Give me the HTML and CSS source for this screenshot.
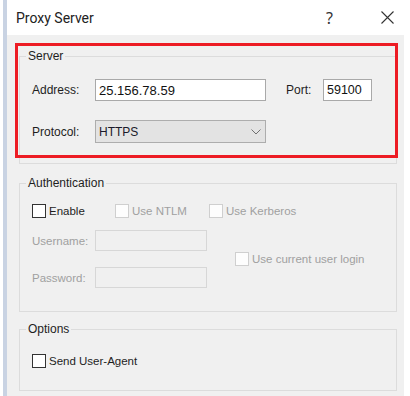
FILE: index.html
```html
<!DOCTYPE html>
<html>
<head>
	<title>Proxy Server</title>
	<meta charset="utf-8">
	<link rel="stylesheet" href="styles.css">
</head>
<body>

	<div class="window">
		<div class="titlebar">
			<span class="title">Proxy Server</span>
			<span class="help">?</span>
			<span class="close">
				<svg width="13" height="13" viewBox="0 0 13 13"><path d="M0.5 0.5 L12.5 12.5 M12.5 0.5 L0.5 12.5" stroke="#333" stroke-width="1.1" fill="none"/></svg>
			</span>
		</div>

		<div class="client">
			<fieldset class="group server">
				<legend>Server</legend>
				<div class="row first">
					<span class="label">Address:</span>
					<input class="text address" type="text" value="25.156.78.59">
					<span class="label port-label">Port:</span>
					<input class="text port" type="text" value="59100">
				</div>
				<div class="row second">
					<span class="label">Protocol:</span>
					<div class="select">
						<span>HTTPS</span>
						<svg width="10" height="6" viewBox="0 0 10 6"><path d="M0.5 0.5 L5 5 L9.5 0.5" stroke="#707070" stroke-width="1" fill="none"/></svg>
					</div>
				</div>
			</fieldset>

			<fieldset class="group auth">
				<legend>Authentication</legend>
				<div class="checks">
					<label class="check enable"><span class="box"></span>Enable</label>
					<label class="check ntlm disabled"><span class="box"></span>Use NTLM</label>
					<label class="check disabled"><span class="box"></span>Use Kerberos</label>
				</div>
				<div class="login">
					<div class="fields">
						<div class="field">
							<span class="label">Username:</span>
							<span class="text off"></span>
						</div>
						<div class="field">
							<span class="label">Password:</span>
							<span class="text off"></span>
						</div>
					</div>
					<label class="check disabled current"><span class="box"></span>Use current user login</label>
				</div>
			</fieldset>

			<fieldset class="group options">
				<legend>Options</legend>
				<label class="check"><span class="box"></span>Send User-Agent</label>
			</fieldset>

			<div class="highlight"></div>
		</div>
	</div>

</body>
</html>
```

FILE: styles.css
```css
* {
	box-sizing: border-box;
}

body {
	margin: 0;
	background: #ffffff;
	font-family: "Liberation Sans", Arial, sans-serif;
	color: #1e1e1e;
}

.window {
	margin-left: 3px;
	width: 401px;
	height: 396px;
	border-left: 4px solid #c9d3e3;
	display: flex;
	flex-direction: column;
}

.titlebar {
	height: 35px;
	background: #ffffff;
	display: flex;
	align-items: center;
	padding-left: 9px;
}

.title {
	font-family: Roboto, "Noto Sans", sans-serif;
	font-size: 14px;
	color: #222;
	flex: 1;
}

.help {
	font-family: "Noto Sans", sans-serif;
	font-size: 16px;
	color: #333;
	margin-right: 48px;
}

.close {
	display: flex;
	margin-right: 10px;
}

.client {
	position: relative;
	flex: 1;
	background: #f0f0f0;
	padding: 0 0 0 12px;
}

fieldset.group {
	width: 378px;
	border: 1px solid #dcdcdc;
	margin: 0;
	padding: 0 12px;
}

legend {
	font-size: 12px;
	line-height: 14px;
	padding: 0 2px;
	margin-left: -6px;
	color: #1e1e1e;
}

.server {
	margin-top: 14px !important;
	padding-bottom: 20px !important;
}

.row {
	display: flex;
	align-items: center;
}

.row.first {
	margin-top: 16px;
	height: 22px;
}

.row.second {
	margin-top: 19px;
	height: 23px;
}

.label {
	width: 63px;
	font-size: 12px;
}

.port-label {
	width: 37px;
	margin-left: 20px;
}

.text {
	height: 22px;
	border: 1px solid #a9a9a9;
	background: #fff;
	font-family: "Liberation Sans", Arial, sans-serif;
	color: #111;
	padding: 0 0 0 3px;
	margin: 0;
	outline: none;
}

.address {
	width: 171px;
	font-size: 13px;
}

.port {
	width: 49px;
	font-size: 12.5px;
}

.select {
	width: 171px;
	height: 23px;
	border: 1px solid #adadad;
	background: #e3e3e3;
	display: flex;
	align-items: center;
	justify-content: space-between;
	padding: 0 4px 0 3px;
	font-size: 12px;
	color: #1a1a2a;
}

.auth {
	margin-top: 12px !important;
	padding-bottom: 23px !important;
}

.checks {
	display: flex;
	margin-top: 14px;
	height: 14px;
	align-items: center;
}

.check {
	display: flex;
	align-items: center;
	font-size: 11.5px;
	color: #1e1e1e;
}

.box {
	width: 14px;
	height: 14px;
	border: 1px solid #333;
	background: #fff;
	margin-right: 3px;
}

.check.enable {
	width: 83px;
}

.check.ntlm {
	width: 94px;
}

.check.disabled {
	color: #a0a0a0;
}

.check.disabled .box {
	border-color: #cfcfcf;
	background: #fdfdfd;
}

.login {
	display: flex;
	align-items: center;
	margin-top: 12px;
}

.fields {
	display: flex;
	flex-direction: column;
	gap: 16px;
}

.field {
	display: flex;
	align-items: center;
}

.field .label {
	font-size: 11.5px;
	color: #a0a0a0;
}

.text.off {
	display: block;
	width: 112px;
	height: 21px;
	border-color: #d7d7d7;
	background: #f0f0f0;
}

.check.current {
	margin-left: 28px;
}

.options {
	margin-top: 10px !important;
	padding-top: 18px !important;
	padding-bottom: 22px !important;
}

.highlight {
	position: absolute;
	left: 8px;
	top: 8px;
	width: 383px;
	height: 115px;
	border: 3px solid #ed1c24;
}
```
